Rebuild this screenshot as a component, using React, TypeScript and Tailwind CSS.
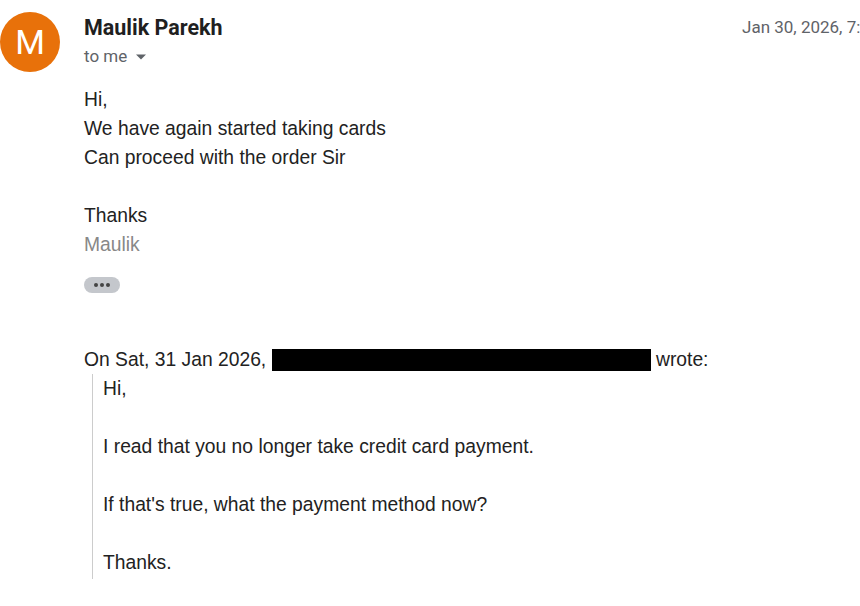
import React from "react";

export default function App() {
  const body = { fontFamily: '"Liberation Sans", Arial, sans-serif' };
  const ui = { fontFamily: 'Roboto, "Noto Sans", sans-serif' };
  return (
    <div className="w-[860px] h-[606px] bg-white overflow-hidden relative">
      <div className="flex pt-3">
        <div className="w-[60px] h-[60px] rounded-full bg-[#e8710a] flex items-center justify-center shrink-0">
          <span className="text-white text-[34px] leading-none" style={ui}>M</span>
        </div>
        <div className="ml-6 flex-1 min-w-0">
          <div className="flex items-start justify-between">
            <div className="pt-[2px]">
              <div className="text-[21.5px] font-bold text-[#1f1f1f] leading-[28px]" style={ui}>Maulik Parekh</div>
              <div className="flex items-center mt-[2px] text-[#5f6368] text-[17px] leading-[24px]" style={ui}>
                <span>to me</span>
                <svg width="12" height="12" viewBox="0 0 12 12" className="ml-[8px] mt-[2px]">
                  <path d="M1 3.5h10L6 8.5z" fill="#5f6368" />
                </svg>
              </div>
            </div>
            <div className="text-[17px] text-[#5f6368] whitespace-nowrap pt-[3px] -mr-[60px] w-[178px]" style={ui}>
              Jan 30, 2026, 7:49 PM
            </div>
          </div>
          <div className="mt-[17px] text-[19.3px] leading-[29px] text-[#222]" style={body}>
            <div>Hi,</div>
            <div>We have again started taking cards</div>
            <div>Can proceed with the order Sir</div>
            <div className="h-[29px]" />
            <div>Thanks</div>
            <div className="text-[#888]">Maulik</div>
          </div>
          <div className="mt-[18px] w-[36px] h-[16px] rounded-full bg-[#c4c7cc] flex items-center justify-center gap-[2px]">
            <span className="w-[4px] h-[4px] rounded-full bg-[#444]" />
            <span className="w-[4px] h-[4px] rounded-full bg-[#444]" />
            <span className="w-[4px] h-[4px] rounded-full bg-[#444]" />
          </div>
          <div className="mt-[52px] text-[19.3px] leading-[29px] text-[#222]" style={body}>
            <div className="flex items-center whitespace-nowrap">
              <span>On Sat, 31 Jan 2026,&nbsp;</span>
              <span className="inline-block w-[379px] h-[22px] bg-black" />
              <span>&nbsp;wrote:</span>
            </div>
            <div className="ml-[8px] border-l border-[#ccc] pl-[10px] pb-[2px]">
              <div>Hi,</div>
              <div className="h-[29px]" />
              <div>I read that you no longer take credit card payment.</div>
              <div className="h-[29px]" />
              <div>If that's true, what the payment method now?</div>
              <div className="h-[29px]" />
              <div>Thanks.</div>
            </div>
          </div>
        </div>
      </div>
    </div>
  );
}
